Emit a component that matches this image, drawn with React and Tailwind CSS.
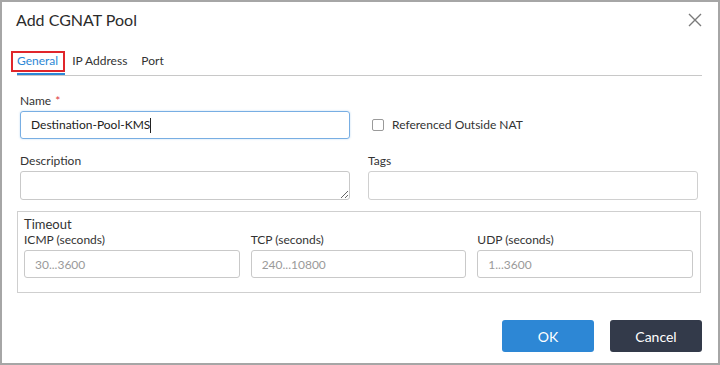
import React from 'react';

const Field = ({ label, required, children, className = '' }) => (
  <div className={`flex flex-col ${className}`}>
    <label className="text-[12px] leading-[16px] text-[#333] mb-[2px]">
      {label}
      {required && <span className="text-[#e0383e] ml-[4px]">*</span>}
    </label>
    {children}
  </div>
);

const TextBox = ({ placeholder }) => (
  <input
    readOnly
    placeholder={placeholder}
    className="h-[28px] w-full border border-[#c9c9c9] rounded-[3px] px-[10px] text-[12px] text-[#333] placeholder:text-[#9a9a9a] outline-none"
  />
);

export default function App() {
  return (
    <div className="w-[720px] h-[365px] border-2 border-[#a6a6a6] bg-white flex flex-col font-['Lato',sans-serif] text-[#333]">
      {/* header */}
      <div className="flex items-start justify-between pt-[6px] pl-[14px] pr-[16px]">
        <h1 className="text-[16px] leading-[24px] text-[#2b2b2b]">Add CGNAT Pool</h1>
        <svg width="14" height="14" viewBox="0 0 14 14" className="mt-[5px]" stroke="#7a7a7a" strokeWidth="1.4" fill="none">
          <path d="M1 1 L13 13 M13 1 L1 13" />
        </svg>
      </div>

      {/* tabs */}
      <div className="flex ml-[15px] mr-[16px] mt-[21px] border-b border-[#c8c8c8] text-[12px] leading-[16px]">
        <div className="relative pr-[7px] pb-[4px] border-b-2 border-[#2d87d5] text-[#2d87d5]">
          General
          <div className="absolute left-[-6px] top-[-2px] w-[54px] h-[21px] border-2 border-[#e0262b]" />
        </div>
        <div className="ml-[7px] pb-[4px]">IP Address</div>
        <div className="ml-[14px] pb-[4px]">Port</div>
      </div>

      {/* form */}
      <div className="grid grid-cols-2 gap-x-[18px] pl-[18px] pr-[20px] mt-[17px]">
        <Field label="Name" required>
          <div className="h-[28px] flex items-center border border-[#78aee3] rounded-[3px] px-[10px] text-[12px] text-[#222] shadow-[0_0_2px_rgba(45,135,213,0.35)]">
            Destination-Pool-KMS
            <span className="inline-block w-px h-[15px] bg-[#222]" />
          </div>
        </Field>
        <div className="flex items-center gap-[8px] pl-[4px] pt-[17px]">
          <span className="w-[12px] h-[12px] border border-[#9a9a9a] rounded-[2px]" />
          <span className="text-[12px] text-[#333]">Referenced Outside NAT</span>
        </div>

        <Field label="Description" className="mt-[14px]">
          <textarea
            readOnly
            className="h-[29px] w-full border border-[#c9c9c9] rounded-[3px] resize-y outline-none block"
          />
        </Field>
        <Field label="Tags" className="mt-[14px]">
          <div className="h-[29px] w-full border border-[#d0d0d0] rounded-[3px]" />
        </Field>
      </div>

      {/* timeout */}
      <div className="ml-[15px] mr-[17px] mt-[11px] border border-[#cfcfcf] pt-[5px] pb-[14px] pl-[6px] pr-[7px]">
        <div className="text-[13px] leading-[15px] text-[#333]">Timeout</div>
        <div className="grid grid-cols-3 gap-x-[11px]">
          <Field label="ICMP (seconds)">
            <TextBox placeholder="30...3600" />
          </Field>
          <Field label="TCP (seconds)">
            <TextBox placeholder="240...10800" />
          </Field>
          <Field label="UDP (seconds)">
            <TextBox placeholder="1...3600" />
          </Field>
        </div>
      </div>

      {/* footer */}
      <div className="flex justify-end gap-[16px] pr-[16px] mt-[27px]">
        <button className="w-[92px] h-[32px] rounded-[3px] bg-[#2d87d5] text-white text-[14px]">OK</button>
        <button className="w-[92px] h-[32px] rounded-[3px] bg-[#333a4a] text-white text-[14px]">Cancel</button>
      </div>
    </div>
  );
}
